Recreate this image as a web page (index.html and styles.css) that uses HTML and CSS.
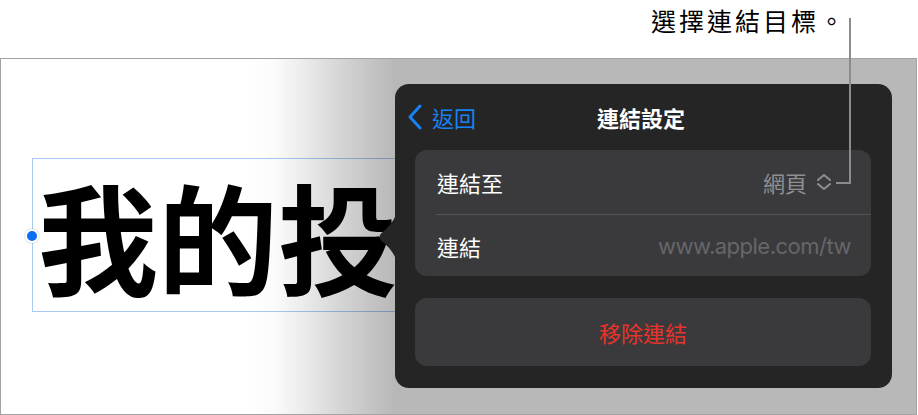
FILE: index.html
```html
<html>
    <head>
        <title>連結設定</title>
        <link rel="stylesheet" href="styles.css">
    </head>
    <body>
        <div class="note-bar">
            <div class="note">選擇連結目標。</div>
        </div>
        <div class="leader"></div>
        <div class="canvas">
            <div class="text-box">我的投</div>
            <div class="handle"></div>
            <div class="shade"></div>
            <div class="popover">
                <svg class="popover-arrow" width="18" height="44" viewBox="0 0 18 44">
                    <path d="M18 0 C15 7 10 13 3 18.5 Q0 22 3 25.5 C10 31 15 37 18 44 Z" fill="#252525"/>
                </svg>
                <div class="pop-header">
                    <div class="back">
                        <svg width="16" height="26" viewBox="0 0 16 26">
                            <path d="M13 2 L3 13 L13 24" fill="none" stroke="#1683f5" stroke-width="3" stroke-linecap="round" stroke-linejoin="round"/>
                        </svg>
                        <span>返回</span>
                    </div>
                    <div class="pop-title">連結設定</div>
                    <div></div>
                </div>
                <div class="card">
                    <div class="row">
                        <span class="label">連結至</span>
                        <span class="value">網頁
                            <svg class="updown" width="16" height="18" viewBox="0 0 16 18">
                                <path d="M2 7 L8 2 L14 7 M2 11 L8 16 L14 11" fill="none" stroke="#8e8e93" stroke-width="2" stroke-linecap="round" stroke-linejoin="round"/>
                            </svg>
                        </span>
                    </div>
                    <div class="sep"></div>
                    <div class="row">
                        <span class="label">連結</span>
                        <span class="url">www.apple.com/tw</span>
                    </div>
                </div>
                <div class="card remove">移除連結</div>
            </div>
        </div>
    </body>
</html>
```

FILE: styles.css
```css
body{
    margin: 0;
    width: 918px;
    height: 415px;
    overflow: hidden;
    position: relative;
    background: #fff;
    font-family: Inter, "Noto Sans CJK TC", sans-serif;
}
.note-bar{
    height: 58px;
    padding-left: 651px;
    box-sizing: border-box;
}
.note{
    padding-top: 6px;
    font-size: 25px;
    letter-spacing: 3px;
    line-height: 32px;
    color: #000;
}
.leader{
    position: absolute;
    left: 836px;
    top: 18px;
    width: 13px;
    height: 164px;
    border-right: 2px solid #8c8c8c;
    border-bottom: 2px solid #8c8c8c;
    z-index: 5;
}
.canvas{
    position: relative;
    width: 917px;
    height: 357px;
    box-sizing: border-box;
    border: 1px solid #a3a3a3;
    overflow: hidden;
}
.text-box{
    position: absolute;
    left: 31px;
    top: 99px;
    width: 400px;
    height: 154px;
    box-sizing: border-box;
    border: 1px solid #a8c9f4;
    padding-left: 5px;
    display: flex;
    align-items: center;
    font-family: "Noto Sans CJK TC", sans-serif;
    font-weight: 700;
    font-size: 120px;
    line-height: 1;
    white-space: nowrap;
    color: #000;
}
.handle{
    position: absolute;
    left: 24px;
    top: 170px;
    width: 10px;
    height: 10px;
    border: 2px solid #fff;
    border-radius: 50%;
    background: #0a6ff0;
    box-shadow: 0 0 2px rgba(0,0,0,.3);
}
.shade{
    position: absolute;
    inset: 0;
    background: linear-gradient(to right, rgba(0,0,0,0) 250px, rgba(0,0,0,.02) 275px, rgba(0,0,0,.07) 299px, rgba(0,0,0,.165) 339px, rgba(0,0,0,.25) 379px, rgba(0,0,0,.28) 394px);
}
.popover{
    position: absolute;
    left: 394px;
    top: 25px;
    width: 497px;
    height: 304px;
    box-sizing: border-box;
    padding: 0 21px 22px 20px;
    background: #252525;
    border-radius: 14px;
    color: #fff;
    font-size: 22px;
}
.popover-arrow{
    position: absolute;
    left: -17px;
    top: 131px;
}
.pop-header{
    height: 66px;
    display: grid;
    grid-template-columns: 1fr auto 1fr;
    align-items: center;
    margin-left: -8px;
}
.back{
    display: flex;
    align-items: center;
    gap: 9px;
    color: #1683f5;
}
.back svg{
    display: block;
}
.pop-title{
    font-weight: 600;
    margin-left: 4px;
}
.card{
    background: #3a3a3c;
    border-radius: 12px;
}
.row{
    height: 64px;
    padding: 0 20px 0 22px;
    display: flex;
    align-items: center;
    justify-content: space-between;
}
.row + .sep + .row{
    height: 61px;
}
.sep{
    height: 1px;
    margin-left: 21px;
    background: #545458;
}
.label{
    color: #fff;
}
.value{
    display: flex;
    align-items: center;
    gap: 9px;
    color: #8e8e93;
    margin-right: 19px;
}
.updown{
    display: block;
}
.url{
    color: #66666b;
    letter-spacing: -0.5px;
}
.remove{
    margin-top: 22px;
    height: 68px;
    display: flex;
    align-items: center;
    justify-content: center;
    color: #e8332b;
}
```
